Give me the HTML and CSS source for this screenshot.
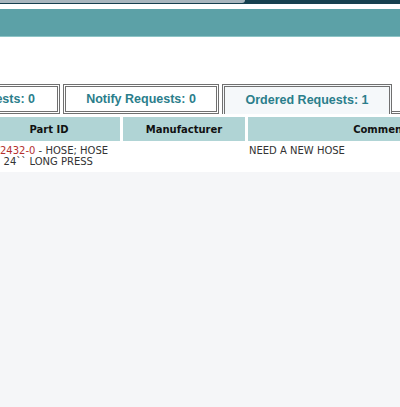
FILE: index.html
```html
<!DOCTYPE html>
<html>
<head>
<meta charset="utf-8">
<link rel="stylesheet" href="styles.css">
</head>
<body>
<div class="page">
  <div class="topbar"><div class="topbar-left"></div></div>
  <div class="banner"></div>
  <div class="tabs">
    <div class="tab tab-first">Pending Requests: 0</div>
    <div class="tab tab-notify">Notify Requests: 0</div>
    <div class="tab tab-ordered active">Ordered Requests: 1</div>
    <div class="tab-rest"></div>
  </div>
  <div class="grid">
    <div class="th">Part ID</div>
    <div class="th">Manufacturer</div>
    <div class="th">Comments</div>
    <div class="td part">
      <div class="line"><span class="pn">2432-0</span> - HOSE; HOSE</div>
      <div class="line line2">: 24`` LONG PRESS</div>
    </div>
    <div class="td"></div>
    <div class="td comment">NEED A NEW HOSE</div>
  </div>
</div>
</body>
</html>
```
FILE: styles.css
```css
html, body {
  margin: 0;
  padding: 0;
}
body {
  background: #f5f6f8;
  overflow: hidden;
  width: 400px;
  height: 407px;
}
.page {
  background: #ffffff;
  padding-bottom: 1px;
  overflow: hidden;
}
.topbar {
  height: 4px;
  background: #16404f;
}
.topbar-left {
  width: 245px;
  height: 3px;
  background: #a8b6be;
  border-bottom-right-radius: 3px;
}
.banner {
  margin-top: 5px;
  height: 27px;
  background: #5ca1a7;
  border-bottom: 1px solid #8ec4c6;
}
.tabs {
  display: flex;
  margin-top: 47px;
  margin-left: -140px;
  height: 30px;
  font-family: "Liberation Sans", Arial, sans-serif;
  font-weight: bold;
  font-size: 12.5px;
  color: #2b7e8b;
}
.tab {
  box-sizing: border-box;
  height: 30px;
  border: 3px double #707070;
  display: flex;
  align-items: center;
  justify-content: center;
  background: #ffffff;
  flex: none;
  padding-bottom: 1px;
}
.tab-first {
  width: 200px;
  justify-content: flex-end;
  padding-right: 22px;
}
.tab-notify {
  margin-left: 3px;
  width: 156px;
}
.tab-ordered {
  margin-left: 3px;
  width: 170px;
}
.tab.active {
  background: #f5f8fa;
  border-bottom: none;
}
.tab-rest {
  flex: 1;
  border-bottom: 3px double #707070;
}
.grid {
  display: grid;
  grid-template-columns: 142px 122px 270px;
  column-gap: 3px;
  margin-top: 3px;
  margin-left: -22px;
  font-family: "DejaVu Sans", Verdana, sans-serif;
}
.th {
  background: #b0d4d5;
  height: 24px;
  display: flex;
  align-items: center;
  justify-content: center;
  font-weight: bold;
  font-size: 10px;
  color: #111111;
  margin-bottom: 1px;
}
.td {
  height: 29px;
  padding-top: 3px;
  box-sizing: border-box;
  font-size: 10px;
  line-height: 11px;
  color: #333333;
}
.part {
  padding-left: 22px;
}
.line {
  white-space: nowrap;
}
.line2 {
  margin-left: -3px;
}
.pn {
  color: #b5302f;
}
.comment {
  padding-left: 1px;
}
```
